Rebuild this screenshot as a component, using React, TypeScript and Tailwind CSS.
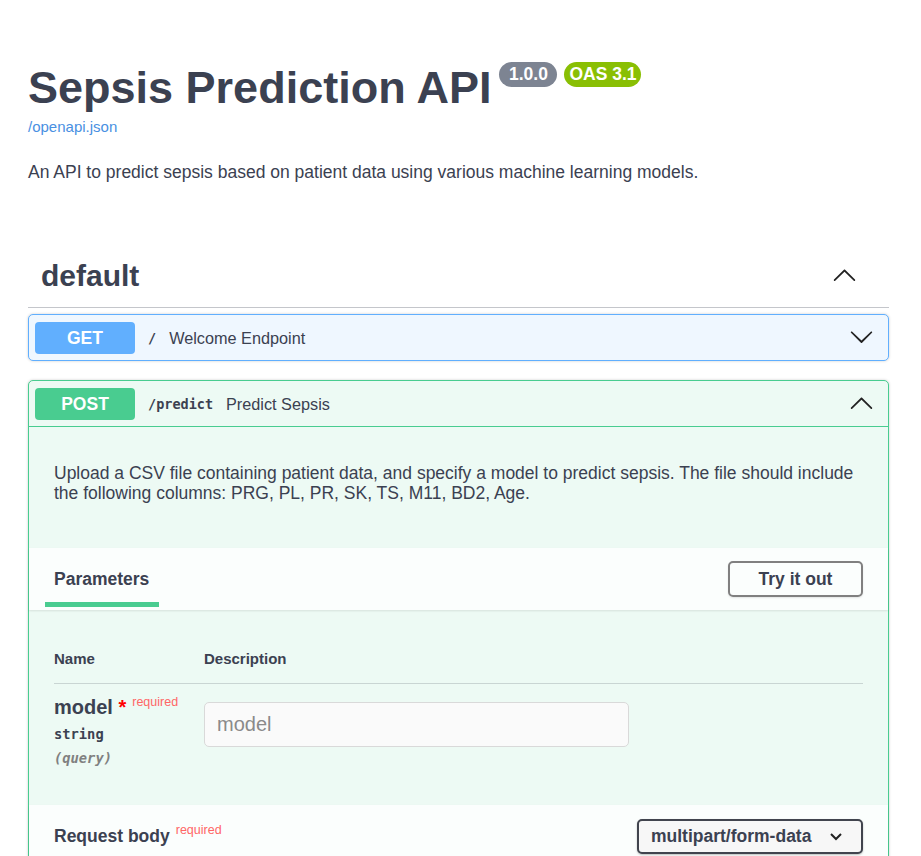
import React from "react";

function ArrowDown({ className }: { className?: string }) {
  return (
    <svg viewBox="0 0 20 20" className={className} fill="currentColor">
      <path d="M17.418 6.109c.272-.268.709-.268.979 0s.271.701 0 .969l-7.908 7.83c-.27.268-.707.268-.979 0l-7.908-7.83c-.27-.268-.27-.701 0-.969.271-.268.709-.268.979 0L10 13.25l7.418-7.141z" />
    </svg>
  );
}

function ArrowUp({ className }: { className?: string }) {
  return (
    <svg viewBox="0 0 20 20" className={className} fill="currentColor">
      <path d="M17.418 14.908C17.69 15.176 18.127 15.176 18.397 14.908C18.667 14.64 18.668 14.207 18.397 13.939L10.489 6.109C10.219 5.841 9.782 5.841 9.51 6.109L1.602 13.939C1.332 14.207 1.332 14.64 1.602 14.908C1.873 15.176 2.311 15.176 2.581 14.908L10 7.767L17.418 14.908Z" />
    </svg>
  );
}

export default function App() {
  return (
    <div className="min-h-screen bg-white pl-[28px] pr-[32px] pb-[200px] font-['Liberation_Sans',Arial,sans-serif] text-[#3b4151]">
      {/* info */}
      <div className="pt-[62px]">
        <div className="flex items-start">
          <h2 className="mt-[3px] text-[45px] font-bold leading-[45px]">
            Sepsis Prediction API
          </h2>
          <div className="ml-[8px] flex gap-[7px]">
            <span className="flex h-[25px] w-[58px] items-center justify-center rounded-full bg-[#7d8492] text-[17.5px] font-bold text-white">
              1.0.0
            </span>
            <span className="flex h-[25px] w-[77px] items-center justify-center rounded-full bg-[#89bf04] text-[17.5px] font-bold text-white">
              OAS 3.1
            </span>
          </div>
        </div>
        <a className="mt-[8px] block text-[15px] leading-[18px] text-[#4990e2]">
          /openapi.json
        </a>
        <p className="mt-[26px] text-[17.5px] leading-[20px]">
          An API to predict sepsis based on patient data using various machine
          learning models.
        </p>
      </div>

      {/* tag */}
      <div className="mt-[63px]">
        <div className="flex items-center border-b border-[#c4c6cb] py-[13px] pl-[13px] pr-[32px]">
          <h3 className="flex-1 text-[30px] font-bold leading-[36px]">
            default
          </h3>
          <ArrowUp className="mb-[4px] h-[25px] w-[25px] text-[#222]" />
        </div>

        {/* GET */}
        <div className="mt-[6px] rounded-[5px] border border-[#61affe] bg-[#eff7ff] shadow-[0_0_3px_rgba(0,0,0,0.19)]">
          <div className="flex items-center pb-[6px] pl-[6px] pr-[14px] pt-[7px]">
            <span className="flex h-[32px] w-[100px] items-center justify-center rounded-[4px] bg-[#61affe] text-[17.5px] font-bold text-white">
              GET
            </span>
            <span className="px-[13px] font-['DejaVu_Sans_Mono',monospace] text-[13.5px] font-bold">
              /
            </span>
            <span className="flex-1 text-[16.25px]">Welcome Endpoint</span>
            <ArrowDown className="mb-[4px] h-[25px] w-[25px] text-[#222]" />
          </div>
        </div>

        {/* POST */}
        <div className="mt-[19px] rounded-[5px] border border-[#49cc90] bg-[#edfaf4] shadow-[0_0_3px_rgba(0,0,0,0.19)]">
          <div className="flex items-center border-b border-[#49cc90] pb-[6px] pl-[6px] pr-[14px] pt-[7px]">
            <span className="flex h-[32px] w-[100px] items-center justify-center rounded-[4px] bg-[#49cc90] text-[17.5px] font-bold text-white">
              POST
            </span>
            <span className="px-[13px] font-['DejaVu_Sans_Mono',monospace] text-[13.5px] font-bold">
              /predict
            </span>
            <span className="flex-1 text-[16.25px]">Predict Sepsis</span>
            <ArrowUp className="mb-[3px] h-[25px] w-[25px] text-[#222]" />
          </div>

          <div className="px-[25px] pb-[45px] pt-[36px]">
            <p className="text-[17.5px] leading-[20px]">
              Upload a CSV file containing patient data, and specify a model to
              predict sepsis. The file should include the following columns:
              PRG, PL, PR, SK, TS, M11, BD2, Age.
            </p>
          </div>

          {/* parameters header */}
          <div className="flex h-[62px] items-start justify-between bg-white/80 px-[25px] shadow-[0_1px_2px_rgba(0,0,0,0.1)]">
            <div className="flex flex-col pt-[21px]">
              <span className="text-[17.5px] font-bold leading-[20px]">
                Parameters
              </span>
              <span className="-ml-[9px] mt-[13px] h-[5px] w-[114px] bg-[#49cc90]" />
            </div>
            <button className="h-[36px] w-[135px] self-center rounded-[5px] border-2 border-[#808080] bg-transparent text-[17.5px] font-bold text-[#3b4151] shadow-[0_1px_2px_rgba(0,0,0,0.1)]">
              Try it out
            </button>
          </div>

          {/* parameters table */}
          <div className="px-[25px] pb-[39px] pt-[40px]">
            <div className="flex border-b border-[#c9d5d3] pb-[15px] text-[15px] font-bold leading-[18px]">
              <div className="w-[150px]">Name</div>
              <div>Description</div>
            </div>
            <div className="flex pt-[12px]">
              <div className="w-[150px]">
                <div className="whitespace-nowrap text-[20px] font-bold leading-[22px]">
                  model
                  <span className="text-[#ff0000]">&nbsp;*</span>
                  <span className="pl-[6px] align-[8px] text-[12.5px] font-normal leading-none text-[#ff6666]">
                    required
                  </span>
                </div>
                <div className="mt-[8px] font-['DejaVu_Sans_Mono',monospace] text-[13.75px] font-bold leading-[16px]">
                  string
                </div>
                <div className="mt-[8px] font-['DejaVu_Sans_Mono',monospace] text-[13.75px] font-bold italic leading-[16px] text-[#808080]">
                  (query)
                </div>
              </div>
              <div className="pt-[6px]">
                <input
                  placeholder="model"
                  className="h-[45px] w-[425px] rounded-[5px] border border-[#d9d9d9] bg-[#fafafa] px-[12px] font-['Liberation_Sans',Arial,sans-serif] text-[20px] outline-none placeholder:text-[#8a8a8a]"
                />
              </div>
            </div>
          </div>

          {/* request body header */}
          <div className="flex h-[62px] items-center justify-between bg-white/80 px-[25px] shadow-[0_1px_2px_rgba(0,0,0,0.1)]">
            <div className="whitespace-nowrap text-[17.5px] font-bold">
              Request body
              <span className="pl-[6px] align-[8px] text-[12.5px] font-normal leading-none text-[#ff6666]">
                required
              </span>
            </div>
            <div className="flex h-[35px] w-[226px] items-center rounded-[5px] border-2 border-[#41444e] bg-[#f7f7f7] pl-[12px] pr-[18px] text-[17.5px] font-bold shadow-[0_1px_2px_rgba(0,0,0,0.25)]">
              <span className="flex-1">multipart/form-data</span>
              <svg viewBox="0 0 14 9" className="h-[9px] w-[14px]" fill="none" stroke="#222" strokeWidth="2">
                <path d="M2 2l5 5 5-5" />
              </svg>
            </div>
          </div>

          <div className="h-[160px]" />
        </div>
      </div>
    </div>
  );
}
